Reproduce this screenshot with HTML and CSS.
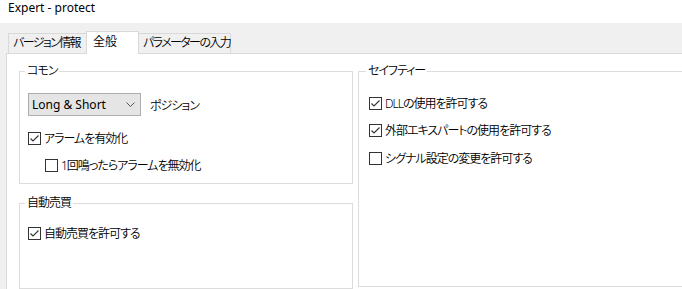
FILE: index.html
```html
<!DOCTYPE html>
<html lang="ja">
<head>
  <meta charset="UTF-8" />
  <title>Expert - protect</title>
  <link rel="stylesheet" href="styles.css">
</head>
<body>

  <div class="titlebar">Expert - protect</div>

  <div class="window">
    <!-- タブ -->
    <div class="tabs">
      <div class="tab tab-info">バージョン情報</div>
      <div class="tab tab-general active">全般</div>
      <div class="tab tab-params">パラメーターの入力</div>
    </div>

    <div class="panel">
      <div class="col col-left">

        <!-- コモン -->
        <div class="group group-common">
          <div class="group-title">コモン</div>
          <div class="select-row">
            <div class="select">
              <span>Long &amp; Short</span>
              <svg class="chevron" width="9" height="5" viewBox="0 0 9 5"><polyline points="0.5,0.5 4.5,4.5 8.5,0.5" fill="none" stroke="#555" stroke-width="1"/></svg>
            </div>
            <span class="select-label jp">ポジション</span>
          </div>
          <div class="check row-alarm">
            <span class="box checked"><svg width="11" height="11" viewBox="0 0 11 11"><polyline points="1.5,5.5 4,8 9.5,2.5" fill="none" stroke="#333" stroke-width="1.1"/></svg></span>
            <span class="check-text jp">アラームを有効化</span>
          </div>
          <div class="check row-once">
            <span class="box"></span>
            <span class="check-text jp">1回鳴ったらアラームを無効化</span>
          </div>
        </div>

        <!-- 自動売買 -->
        <div class="group group-auto">
          <div class="group-title">自動売買</div>
          <div class="check row-auto">
            <span class="box checked"><svg width="11" height="11" viewBox="0 0 11 11"><polyline points="1.5,5.5 4,8 9.5,2.5" fill="none" stroke="#333" stroke-width="1.1"/></svg></span>
            <span class="check-text jp">自動売買を許可する</span>
          </div>
        </div>

      </div>

      <div class="col col-right">
        <!-- セイフティー -->
        <div class="group group-safety">
          <div class="group-title">セイフティー</div>
          <div class="check row-dll">
            <span class="box checked"><svg width="11" height="11" viewBox="0 0 11 11"><polyline points="1.5,5.5 4,8 9.5,2.5" fill="none" stroke="#333" stroke-width="1.1"/></svg></span>
            <span class="check-text jp">DLLの使用を許可する</span>
          </div>
          <div class="check row-expert">
            <span class="box checked"><svg width="11" height="11" viewBox="0 0 11 11"><polyline points="1.5,5.5 4,8 9.5,2.5" fill="none" stroke="#333" stroke-width="1.1"/></svg></span>
            <span class="check-text jp">外部エキスパートの使用を許可する</span>
          </div>
          <div class="check row-signal">
            <span class="box"></span>
            <span class="check-text jp">シグナル設定の変更を許可する</span>
          </div>
        </div>
      </div>
    </div>
  </div>

</body>
</html>
```

FILE: styles.css
```css
* {
  box-sizing: border-box;
}

body {
  margin: 0;
  overflow: hidden;
  background-color: white;
  color: #000;
  font-family: 'Noto Sans', 'Noto Sans CJK JP', sans-serif;
  font-size: 12px;
  font-feature-settings: 'palt';
}

.jp {
  letter-spacing: -1px;
  font-weight: 350;
}

.titlebar {
  height: 23px;
  padding: 0 0 0 8px;
  line-height: 15px;
}

.window {
  background-color: #f0f0f0;
  padding: 8px 0 0 6px;
  height: 266px;
}

/* タブ */
.tabs {
  display: flex;
  align-items: flex-end;
  margin-left: 2px;
  margin-bottom: -1px;
  position: relative;
  z-index: 1;
}

.tab {
  height: 21px;
  border: 1px solid #d9d9d9;
  background-color: #f0f0f0;
  line-height: 18px;
  padding-left: 4px;
  white-space: nowrap;
  letter-spacing: -1.6px;
  font-weight: 350;
}

.tab-info {
  width: 79px;
}

.tab.active {
  height: 23px;
  width: 53px;
  margin-left: -1px;
  border-bottom: none;
  background-color: white;
  padding-left: 6px;
  line-height: 20px;
  letter-spacing: 0;
}

.tab-params {
  width: 93px;
  margin-left: -1px;
  padding-left: 4px;
}

.panel {
  display: flex;
  gap: 5px;
  width: 720px;
  height: 260px;
  background-color: white;
  border: 1px solid #d9d9d9;
  padding: 17px 0 0 12px;
}

.col {
  display: flex;
  flex-direction: column;
  gap: 19px;
}

.col-left {
  width: 334px;
}

.col-right {
  width: 340px;
}

/* グループ */
.group {
  border: 1px solid #dcdcdc;
  padding: 0 8px;
}

.group-title {
  width: fit-content;
  margin: -9px 0 0 -3px;
  padding: 0 2px;
  line-height: 16px;
  background-color: white;
  letter-spacing: -1px;
  font-weight: 350;
}

.group-common {
  height: 113px;
}

.group-auto {
  height: 86px;
}

.group-safety {
  height: 216px;
  padding-left: 10px;
}

.group-safety .group-title {
  margin-left: -3px;
}

.select-row {
  display: flex;
  align-items: center;
  margin-top: 14px;
}

.select {
  display: flex;
  align-items: center;
  justify-content: space-between;
  width: 113px;
  height: 23px;
  background-color: #e5e5e5;
  border: 1px solid #adadad;
  padding: 0 5px 0 3px;
}

.select-label {
  margin-left: 9px;
}

/* チェックボックス */
.check {
  display: flex;
  align-items: center;
  height: 13px;
  line-height: 13px;
}

.box {
  display: flex;
  align-items: center;
  justify-content: center;
  width: 13px;
  height: 13px;
  border: 1px solid #333;
  background-color: white;
  flex-shrink: 0;
}

.check-text {
  margin-left: 3px;
  white-space: nowrap;
}

.row-alarm {
  margin-top: 16px;
}

.row-once {
  margin-top: 14px;
  margin-left: 17px;
}

.row-auto {
  margin-top: 16px;
}

.row-dll {
  margin-top: 18px;
}

.row-expert {
  margin-top: 14px;
}

.row-signal {
  margin-top: 15px;
}
```
